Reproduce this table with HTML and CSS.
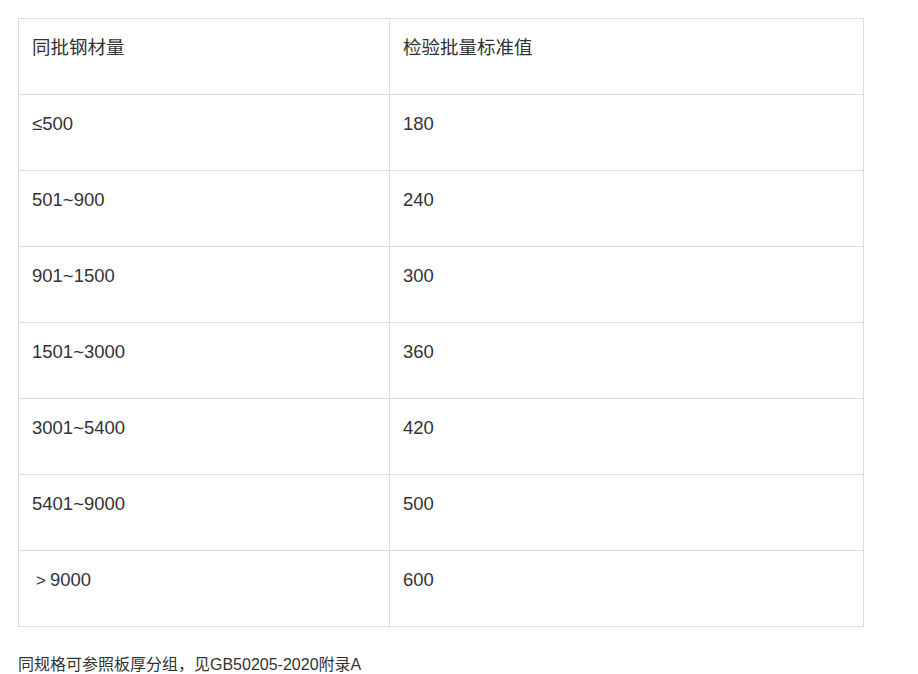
FILE: index.html
```html
<!DOCTYPE html>
<html lang="zh">
<head>
<meta charset="utf-8">
<link rel="stylesheet" href="styles.css">
</head>
<body>
<div class="page">
  <table class="grid">
    <colgroup><col class="c1"><col class="c2"></colgroup>
    <tbody>
      <tr><td>同批钢材量</td><td>检验批量标准值</td></tr>
      <tr><td>≤500</td><td>180</td></tr>
      <tr><td>501~900</td><td>240</td></tr>
      <tr><td>901~1500</td><td>300</td></tr>
      <tr><td>1501~3000</td><td>360</td></tr>
      <tr><td>3001~5400</td><td>420</td></tr>
      <tr><td>5401~9000</td><td>500</td></tr>
      <tr><td><span class="gt">&gt;</span>9000</td><td>600</td></tr>
    </tbody>
  </table>
  <p class="note">同规格可参照板厚分组，见GB50205-2020附录A</p>
</div>
</body>
</html>
```
FILE: styles.css
```css
html, body {
  margin: 0;
  padding: 0;
  background: #fff;
}
.page {
  padding: 18px 18px 0 18px;
  font-family: "Liberation Sans", Arial, "Noto Sans CJK SC", sans-serif;
  color: #333;
}
.grid {
  border-collapse: collapse;
  width: 845px;
  table-layout: fixed;
}
.c1 { width: 371px; }
.c2 { width: 474px; }
.grid td {
  border: 1px solid #ddd;
  height: 76px;
  box-sizing: border-box;
  padding: 15px 13px 0 13px;
  vertical-align: top;
  font-size: 18.5px;
  line-height: 27px;
}
.gt {
  display: inline-block;
  width: 18px;
  text-align: center;
  font-size: 17px;
  font-family: "Liberation Sans", Arial, sans-serif;
}
.note {
  margin: 26px 0 0 0;
  font-size: 16px;
  line-height: 24px;
}
```
